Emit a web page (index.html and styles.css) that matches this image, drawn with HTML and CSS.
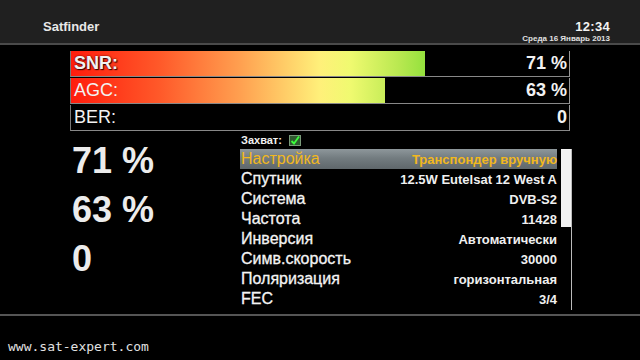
FILE: index.html
```html
<!DOCTYPE html>
<html lang="ru">
<head>
    <meta charset="UTF-8">
    <meta name="viewport" content="width=device-width, initial-scale=1.0">
    <title>Satfinder</title>
    <link rel="stylesheet" href="styles.css">
</head>
<body>

<div id="screen">
    <!-- Top bar -->
    <div class="header">
        <div class="title">Satfinder</div>
        <div class="clock">
            <div class="time">12:34</div>
            <div class="date">Среда 16 Январь 2013</div>
        </div>
    </div>

    <!-- Signal meters -->
    <div class="meters">
        <div class="meter">
            <div class="fill" style="width: 71%"></div>
            <div class="meter-text">
                <span class="meter-label strong">SNR:</span>
                <span class="meter-value">71 %</span>
            </div>
        </div>
        <div class="meter">
            <div class="fill" style="width: 63%"></div>
            <div class="meter-text">
                <span class="meter-label">AGC:</span>
                <span class="meter-value">63 %</span>
            </div>
        </div>
        <div class="meter">
            <div class="fill" style="width: 0%"></div>
            <div class="meter-text">
                <span class="meter-label">BER:</span>
                <span class="meter-value">0</span>
            </div>
        </div>
    </div>

    <div class="main">
        <!-- Big readouts -->
        <div class="readouts">
            <div class="readout">71 %</div>
            <div class="readout">63 %</div>
            <div class="readout">0</div>
        </div>

        <!-- Transponder settings -->
        <div class="settings">
            <div class="lock">
                <span>Захват:</span>
                <span class="lock-box">
                    <svg width="12" height="11" viewBox="0 0 12 11">
                        <rect x="0.5" y="0.5" width="11" height="10" fill="#2f5a2f" stroke="#7a9a7a"/>
                        <path d="M2.5 6 L5 8.5 L10 1.5" fill="none" stroke="#3cff3c" stroke-width="1.8"/>
                    </svg>
                </span>
            </div>
            <div class="list-wrap">
                <div class="list">
                    <div class="row active"><span class="name">Настройка</span><span class="value">Транспондер вручную</span></div>
                    <div class="row"><span class="name">Спутник</span><span class="value">12.5W Eutelsat 12 West A</span></div>
                    <div class="row"><span class="name">Система</span><span class="value">DVB-S2</span></div>
                    <div class="row"><span class="name">Частота</span><span class="value">11428</span></div>
                    <div class="row"><span class="name">Инверсия</span><span class="value">Автоматически</span></div>
                    <div class="row"><span class="name">Симв.скорость</span><span class="value">30000</span></div>
                    <div class="row"><span class="name">Поляризация</span><span class="value">горизонтальная</span></div>
                    <div class="row"><span class="name">FEC</span><span class="value">3/4</span></div>
                </div>
                <div class="scrollbar">
                    <div class="thumb"></div>
                </div>
            </div>
        </div>
    </div>

    <div class="footer">www.sat-expert.com</div>
</div>

</body>
</html>
```

FILE: styles.css
```css
body {
    margin: 0;
    padding: 0;
    background-color: #000;
    font-family: 'Liberation Sans', Arial, sans-serif;
    color: #f2f2f2;
}

#screen {
    width: 640px;
    height: 360px;
    overflow: hidden;
    background-color: #000;
}

/* Header */
.header {
    height: 43px;
    background-color: #202020;
    border-bottom: 2px solid #4a4a4a;
    display: flex;
    justify-content: space-between;
    padding: 0 30px 0 43px;
}

.title {
    font-size: 13px;
    font-weight: bold;
    color: #e8e8e8;
    padding-top: 19px;
}

.clock {
    text-align: right;
    padding-top: 19px;
}

.time {
    font-size: 13px;
    font-weight: bold;
    line-height: 15px;
    letter-spacing: 0.3px;
}

.date {
    font-size: 8px;
    font-weight: bold;
    line-height: 9px;
    color: #e0e0e0;
}

/* Meters */
.meters {
    margin: 6px 70px 0 70px;
    display: flex;
    flex-direction: column;
    gap: 1px;
}

.meter {
    height: 26px;
    display: grid;
    border-left: 1px solid #777;
    border-right: 1px solid #999;
    border-bottom: 1px solid #888;
    box-sizing: border-box;
    background-color: #000;
}

.fill,
.meter-text {
    grid-area: 1 / 1;
}

.fill {
    height: 100%;
    background-image: linear-gradient(90deg, #ff1c0c 0%, #ff5a2a 18%, #ffa050 34%, #fff07a 50%, #f0fa70 56%, #b8e850 66%, #8ee03a 72%, #60d030 100%);
    background-size: 498px 100%;
    background-repeat: no-repeat;
}

.meter-text {
    display: flex;
    justify-content: space-between;
    align-items: center;
    padding: 0 2px 2px 3px;
    font-size: 18px;
    line-height: 20px;
}

.meter-label.strong {
    font-weight: bold;
    text-shadow: 0 0 2px #400, 1px 1px 1px #300;
}

.meter-value {
    font-weight: bold;
}

/* Lower part */
.main {
    height: 183px;
    display: flex;
    padding-left: 72px;
}

.readouts {
    width: 168px;
    padding-top: 5px;
}

.readout {
    font-size: 36px;
    font-weight: bold;
    line-height: 49px;
    color: #ececec;
}

.settings {
    width: 332px;
}

.lock {
    height: 18px;
    display: flex;
    align-items: center;
    gap: 7px;
    padding-left: 1px;
    font-size: 11px;
    font-weight: bold;
}

.lock-box svg {
    display: block;
}

.list-wrap {
    display: flex;
}

.list {
    width: 317px;
}

.row {
    height: 20px;
    display: flex;
    justify-content: space-between;
    align-items: center;
}

.name {
    font-size: 16px;
    padding-left: 1px;
    color: #f4f4f4;
    -webkit-text-stroke: 0.3px #f4f4f4;
}

.value {
    font-size: 13px;
    font-weight: bold;
    color: #f0f0f0;
}

.row.active {
    background-image: linear-gradient(180deg, #8e979b 0%, #737c80 45%, #5f676b 100%);
}

.row.active .name,
.row.active .value {
    color: #f2b81e;
    -webkit-text-stroke: 0;
}

.scrollbar {
    width: 10px;
    margin-left: 4px;
    height: 161px;
    border-right: 1px solid #bbb;
}

.thumb {
    height: 78px;
    background-color: #f2f2f2;
}

/* Footer */
.footer {
    border-top: 2px solid #555;
    height: 43px;
    padding-left: 8px;
    box-sizing: border-box;
    padding-top: 24px;
    font-family: 'DejaVu Sans Mono', monospace;
    font-size: 13px;
    line-height: 14px;
    color: #e2e2e2;
}
```
